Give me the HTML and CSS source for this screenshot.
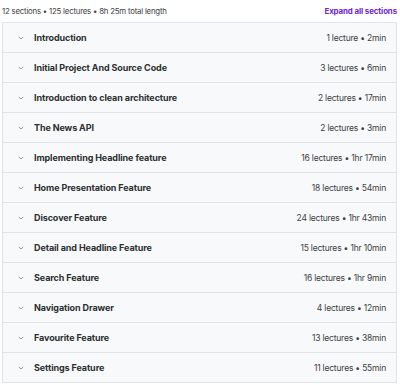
FILE: index.html
```html
<!DOCTYPE html>
<html lang="en">
<head>
    <meta charset="UTF-8">
    <title>Course content</title>
    <link rel="stylesheet" href="styles.css">
</head>
<body>
    <div class="summary">
        <span class="summary-text">12 sections • 125 lectures • 8h 25m total length</span>
        <button class="expand-btn">Expand all sections</button>
    </div>
    <div class="sections">
        <div class="section"><span class="chevron"><svg viewBox="0 0 10 10"><path d="M2.8 4 L5 6 L7.2 4"/></svg></span><span class="title">Introduction</span><span class="meta">1 lecture • 2min</span></div>
        <div class="section"><span class="chevron"><svg viewBox="0 0 10 10"><path d="M2.8 4 L5 6 L7.2 4"/></svg></span><span class="title">Initial Project And Source Code</span><span class="meta">3 lectures • 6min</span></div>
        <div class="section"><span class="chevron"><svg viewBox="0 0 10 10"><path d="M2.8 4 L5 6 L7.2 4"/></svg></span><span class="title">Introduction to clean architecture</span><span class="meta">2 lectures • 17min</span></div>
        <div class="section"><span class="chevron"><svg viewBox="0 0 10 10"><path d="M2.8 4 L5 6 L7.2 4"/></svg></span><span class="title">The News API</span><span class="meta">2 lectures • 3min</span></div>
        <div class="section"><span class="chevron"><svg viewBox="0 0 10 10"><path d="M2.8 4 L5 6 L7.2 4"/></svg></span><span class="title">Implementing Headline feature</span><span class="meta">16 lectures • 1hr 17min</span></div>
        <div class="section"><span class="chevron"><svg viewBox="0 0 10 10"><path d="M2.8 4 L5 6 L7.2 4"/></svg></span><span class="title">Home Presentation Feature</span><span class="meta">18 lectures • 54min</span></div>
        <div class="section"><span class="chevron"><svg viewBox="0 0 10 10"><path d="M2.8 4 L5 6 L7.2 4"/></svg></span><span class="title">Discover Feature</span><span class="meta">24 lectures • 1hr 43min</span></div>
        <div class="section"><span class="chevron"><svg viewBox="0 0 10 10"><path d="M2.8 4 L5 6 L7.2 4"/></svg></span><span class="title">Detail and Headline Feature</span><span class="meta">15 lectures • 1hr 10min</span></div>
        <div class="section"><span class="chevron"><svg viewBox="0 0 10 10"><path d="M2.8 4 L5 6 L7.2 4"/></svg></span><span class="title">Search Feature</span><span class="meta">16 lectures • 1hr 9min</span></div>
        <div class="section"><span class="chevron"><svg viewBox="0 0 10 10"><path d="M2.8 4 L5 6 L7.2 4"/></svg></span><span class="title">Navigation Drawer</span><span class="meta">4 lectures • 12min</span></div>
        <div class="section"><span class="chevron"><svg viewBox="0 0 10 10"><path d="M2.8 4 L5 6 L7.2 4"/></svg></span><span class="title">Favourite Feature</span><span class="meta">13 lectures • 38min</span></div>
        <div class="section"><span class="chevron"><svg viewBox="0 0 10 10"><path d="M2.8 4 L5 6 L7.2 4"/></svg></span><span class="title">Settings Feature</span><span class="meta">11 lectures • 55min</span></div>
    </div>
</body>
</html>
```

FILE: styles.css
```css
body {
    margin: 0;
    background-color: #fff;
    font-family: Inter, "Liberation Sans", sans-serif;
    color: #2d2f31;
}

.summary {
    display: flex;
    justify-content: space-between;
    align-items: center;
    height: 22px;
    padding: 0 3px 0 2px;
}

.summary-text {
    font-size: 7.8px;
    color: #3e4143;
    letter-spacing: -0.2px;
}

.expand-btn {
    border: none;
    background: none;
    padding: 0;
    font-family: inherit;
    font-size: 7.9px;
    font-weight: 700;
    color: #6d28d2;
    letter-spacing: -0.1px;
}

.sections {
    margin: 0 3px 0 2px;
    border: 1px solid #e1e4e7;
    border-bottom: none;
}

.section {
    display: flex;
    align-items: center;
    height: 29px;
    padding: 0 10px 0 13px;
    background-color: #f7f9fa;
    border-bottom: 1px solid #e1e4e7;
}

.chevron {
    width: 10px;
    height: 10px;
    margin-right: 8px;
    display: flex;
}

.chevron svg {
    width: 10px;
    height: 10px;
    fill: none;
    stroke: #8a8f93;
    stroke-width: 0.9;
}

.title {
    flex: 1;
    font-size: 9px;
    font-weight: 700;
    letter-spacing: -0.1px;
}

.meta {
    font-size: 8.5px;
    color: #3e4143;
    letter-spacing: -0.2px;
}
```
